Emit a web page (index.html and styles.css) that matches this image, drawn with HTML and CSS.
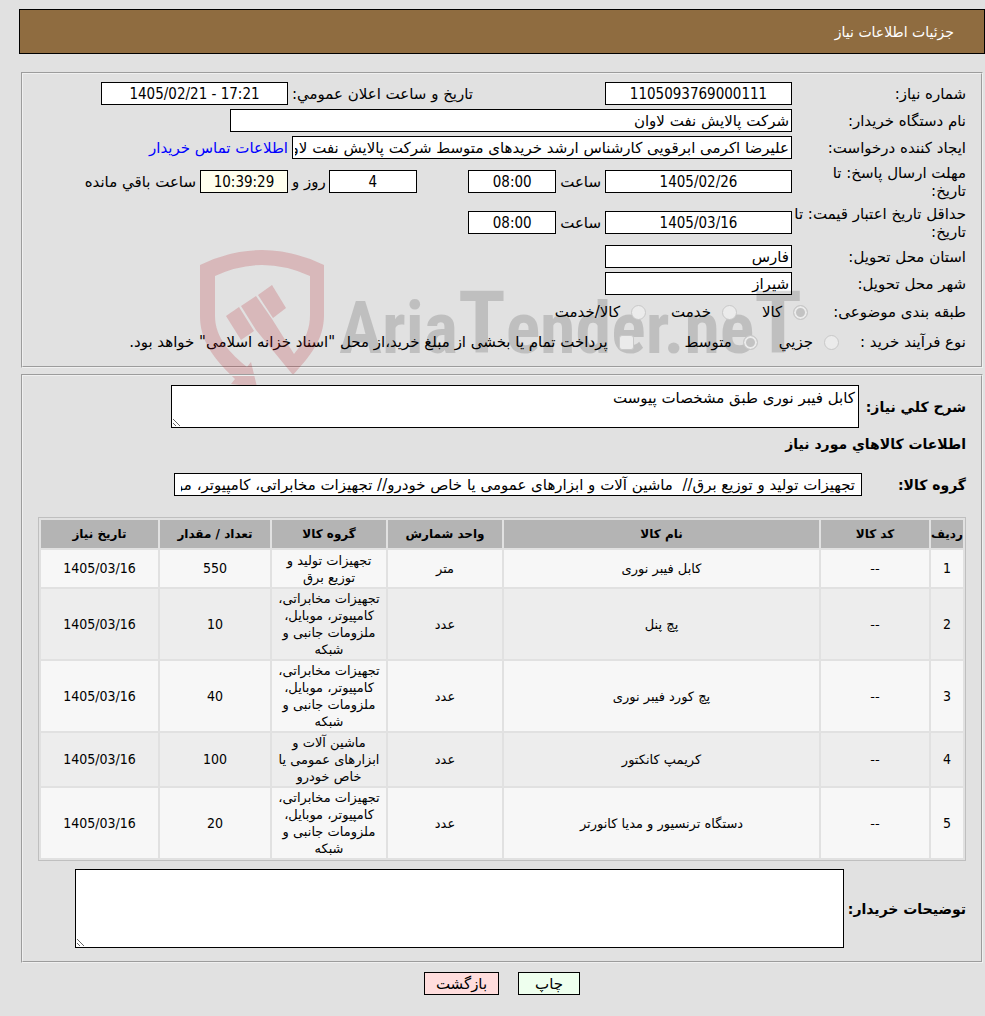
FILE: index.html
```html
<!DOCTYPE html>
<html lang="fa" dir="rtl">
<head>
  <meta charset="UTF-8">
  <title>جزئیات اطلاعات نیاز</title>
  <link rel="stylesheet" href="styles.css">
</head>
<body>

<h1 class="page-title">جزئیات اطلاعات نیاز</h1>

<section class="panel panel-info">
  <div class="row">
    <label class="row-label" for="needNo">شماره نیاز:</label>
    <div class="row-main">
      <input class="field field-md center" id="needNo" dir="ltr" value="1105093769000111" readonly>
      <label for="announce">تاریخ و ساعت اعلان عمومي:</label>
    </div>
    <input class="field field-md center" id="announce" dir="ltr" value="1405/02/21 - 17:21" readonly>
  </div>
  <div class="row">
    <label class="row-label" for="buyer">نام دستگاه خریدار:</label>
    <input class="field field-xl" id="buyer" value="شرکت پالایش نفت لاوان" readonly>
  </div>
  <div class="row">
    <label class="row-label" for="creator">ایجاد کننده درخواست:</label>
    <div class="row-main">
      <input class="field field-lg" id="creator" value="علیرضا اکرمی ابرقویی کارشناس ارشد خریدهای متوسط شرکت پالایش نفت لاوان" readonly>
    </div>
    <a class="contact" href="#">اطلاعات تماس خریدار</a>
  </div>
  <div class="row row-tall">
    <label class="row-label" for="replyDate">مهلت ارسال پاسخ: تا<br>تاریخ:</label>
    <div class="row-main">
      <div class="group">
        <input class="field field-md center" id="replyDate" dir="ltr" value="1405/02/26" readonly>
        <label for="replyTime">ساعت</label>
        <input class="field field-sm center" id="replyTime" dir="ltr" value="08:00" readonly>
      </div>
      <div class="group group-days">
        <input class="field field-sm center" id="days" value="4" readonly>
        <label for="days">روز و</label>
      </div>
    </div>
    <div class="group">
      <input class="field field-sm center timer" id="timer" dir="ltr" value="10:39:29" readonly>
      <label for="timer">ساعت باقي مانده</label>
    </div>
  </div>
  <div class="row row-tall">
    <label class="row-label" for="priceDate">حداقل تاریخ اعتبار قیمت: تا<br>تاریخ:</label>
    <div class="group">
      <input class="field field-md center" id="priceDate" dir="ltr" value="1405/03/16" readonly>
      <label for="priceTime">ساعت</label>
      <input class="field field-sm center" id="priceTime" dir="ltr" value="08:00" readonly>
    </div>
  </div>
  <div class="row">
    <label class="row-label" for="province">استان محل تحویل:</label>
    <input class="field field-md" id="province" value="فارس" readonly>
  </div>
  <div class="row">
    <label class="row-label" for="city">شهر محل تحویل:</label>
    <input class="field field-md" id="city" value="شیراز" readonly>
  </div>
  <div class="row row-options">
    <span>طبقه بندی موضوعی:</span>
    <label class="option"><input type="radio" name="kind" checked disabled>کالا</label>
    <label class="option"><input type="radio" name="kind" disabled>خدمت</label>
    <label class="option"><input type="radio" name="kind" disabled>کالا/خدمت</label>
  </div>
  <div class="row row-options row-process">
    <span>نوع فرآیند خرید :</span>
    <label class="option"><input type="radio" name="process" disabled>جزیي</label>
    <label class="option"><input type="radio" name="process" checked disabled>متوسط</label>
    <label class="option option-pay"><input type="checkbox" disabled>پرداخت تمام یا بخشی از مبلغ خرید،از محل "اسناد خزانه اسلامی" خواهد بود.</label>
  </div>

  <svg class="watermark" width="610" height="142" viewBox="0 0 610 142" direction="ltr">
    <g class="wm-red">
      <path d="M0 15Q62 -15 124 15V65C124 90 110 106 93 125L56 80L41 56L56 46L72 69L94 104C106 90 110 78 110 65V26Q62 4 15 26V66C15 88 31 104 47 117L51 112L57 137L31 134L35 129C13 108 0 90 0 66Z"/>
      <path d="M26 66L39 57L54 81L41 90Z"/>
      <path d="M58 45L72 35L86 58L73 68Z"/>
    </g>
    <text class="wm-text" x="139" y="103">Aria<tspan class="wm-cap">T</tspan>ender.ne<tspan class="wm-cap">T</tspan></text>
  </svg>
</section>

<section class="panel panel-goods">
  <div class="line">
    <label class="line-label" for="summary">شرح کلي نیاز:</label>
    <textarea class="field area-summary" id="summary" readonly>کابل فیبر نوری طبق مشخصات پیوست</textarea>
  </div>
  <h2 class="subtitle">اطلاعات کالاهاي مورد نیاز</h2>
  <div class="line">
    <label class="line-label label-group" for="goodsGroup">گروه کالا:</label>
    <input class="field field-group" id="goodsGroup" value="تجهیزات تولید و توزیع برق//  ماشین آلات و ابزارهای عمومی یا خاص خودرو// تجهیزات مخابراتی، کامپیوتر، موبایل، ملزومات جانبی و شبکه" readonly>
  </div>

  <table class="goods">
    <thead>
      <tr>
        <th class="c-row">ردیف</th>
        <th class="c-code">کد کالا</th>
        <th>نام کالا</th>
        <th class="c-unit">واحد شمارش</th>
        <th class="c-group">گروه کالا</th>
        <th class="c-count">تعداد / مقدار</th>
        <th class="c-date">تاریخ نیاز</th>
      </tr>
    </thead>
    <tbody>
      <tr><td class="num">1</td><td>--</td><td>کابل فیبر نوری</td><td>متر</td><td>تجهیزات تولید و<br>توزیع برق</td><td class="num">550</td><td class="num">1405/03/16</td></tr>
      <tr><td class="num">2</td><td>--</td><td>پچ پنل</td><td>عدد</td><td>تجهیزات مخابراتی،<br>کامپیوتر، موبایل،<br>ملزومات جانبی و<br>شبکه</td><td class="num">10</td><td class="num">1405/03/16</td></tr>
      <tr><td class="num">3</td><td>--</td><td>پچ کورد فیبر نوری</td><td>عدد</td><td>تجهیزات مخابراتی،<br>کامپیوتر، موبایل،<br>ملزومات جانبی و<br>شبکه</td><td class="num">40</td><td class="num">1405/03/16</td></tr>
      <tr><td class="num">4</td><td>--</td><td>کریمپ کانکتور</td><td>عدد</td><td>ماشین آلات و<br>ابزارهای عمومی یا<br>خاص خودرو</td><td class="num">100</td><td class="num">1405/03/16</td></tr>
      <tr><td class="num">5</td><td>--</td><td>دستگاه ترنسیور و مدیا کانورتر</td><td>عدد</td><td>تجهیزات مخابراتی،<br>کامپیوتر، موبایل،<br>ملزومات جانبی و<br>شبکه</td><td class="num">20</td><td class="num">1405/03/16</td></tr>
    </tbody>
  </table>

  <div class="line">
    <label class="line-label label-notes" for="notes">توضیحات خریدار:</label>
    <textarea class="field area-notes" id="notes" readonly></textarea>
  </div>
</section>

<div class="actions">
  <button class="btn btn-print" type="button">چاپ</button>
  <button class="btn btn-back" type="button">بازگشت</button>
</div>

</body>
</html>
```
FILE: styles.css
```css
* {
  box-sizing: border-box;
}

body {
  margin: 0;
  padding: 9px 0 20px 19px;
  background: #e1e1e1;
  color: #000;
  font-family: "DejaVu Sans", Tahoma, sans-serif;
  font-size: 15px;
  line-height: 18px;
}

.page-title {
  display: flex;
  align-items: center;
  height: 45px;
  margin: 0 0 18px;
  padding: 0 30px;
  border: 1px solid #000;
  background: #8f6c40;
  color: #fff;
  font-size: 14px;
  font-weight: normal;
}

.panel {
  position: relative;
  margin: 0 2px 6px;
  border: 2px groove #f0f0f0;
}

.panel-info {
  display: flex;
  flex-direction: column;
  gap: 4px;
  padding: 8px 15px 11px;
}

.row {
  display: flex;
  align-items: center;
  min-height: 23px;
  white-space: nowrap;
}

.row-tall {
  min-height: 37px;
}

.row-label {
  flex: 0 0 174px;
}

.row-main {
  display: flex;
  flex: 0 0 504px;
  align-items: center;
  justify-content: space-between;
  padding-left: 4px;
}

.group {
  display: flex;
  align-items: center;
  gap: 4px;
}

.group-days {
  gap: 3px;
}

.row-options {
  gap: 25px;
  min-height: 26px;
}

.row-process {
  gap: 21px;
}

.option {
  display: flex;
  align-items: center;
  gap: 11px;
}

.option-pay {
  margin-right: 30px;
}

.option input {
  appearance: none;
  position: relative;
  z-index: 1;
  width: 15px;
  height: 15px;
  margin: 0;
  border: 1px solid #c8c8c8;
  border-radius: 50%;
  background: #ebebeb;
}

.option input[type="checkbox"] {
  border-radius: 3px;
}

.option input:checked {
  background: #c3c3c3;
  box-shadow: inset 0 0 0 2px #ebebeb;
}

.field {
  height: 23px;
  margin: 0;
  padding: 1px 2px;
  border: 1px solid #000;
  border-radius: 0;
  background: #fff;
  color: #000;
  font-family: inherit;
  font-size: 15px;
}

.field-sm { width: 88px; }
.field-md { width: 187px; }
.field-lg { width: 500px; }
.field-xl { width: 562px; }

.center {
  font-family: "DejaVu Sans Condensed", Tahoma, sans-serif;
  text-align: center;
}

.timer {
  background: #ffffee;
}

.contact {
  color: #00f;
  text-decoration: none;
}

.watermark {
  position: absolute;
  top: 176px;
  left: 177px;
  pointer-events: none;
}

.wm-red {
  fill: rgba(180, 20, 30, 0.2);
}

.wm-text {
  fill: rgba(0, 0, 0, 0.15);
  font-family: "Roboto Condensed", Roboto, sans-serif;
  font-size: 72px;
  font-weight: bold;
}

.wm-cap {
  font-size: 88px;
}

.panel-goods {
  padding: 9px 15px 13px;
}

.line {
  display: flex;
  align-items: center;
}

.line-label {
  flex: 0 0 107px;
  font-size: 14px;
  font-weight: bold;
  white-space: nowrap;
}

.label-group {
  flex-basis: 104px;
}

.label-notes {
  flex-basis: 122px;
}

.area-summary,
.field-group {
  width: 688px;
}

.field-group {
  padding: 1px 6px;
}

.area-summary {
  height: 43px;
  padding: 3px;
}

.area-notes {
  width: 769px;
  height: 79px;
}

.subtitle {
  margin: 7px 0 20px;
  font-size: 14px;
  font-weight: bold;
}

.goods {
  width: 100%;
  margin: 21px 0 8px;
  border: 1px solid #bfbfbf;
  border-spacing: 2px;
  table-layout: fixed;
  font-size: 13px;
  line-height: 17px;
  text-align: center;
}

.goods th {
  height: 28px;
  padding: 0;
  background: #b4b4b4;
  font-size: 12px;
  white-space: nowrap;
}

.goods td {
  height: 37px;
  padding: 1px;
  background: #ededed;
}

.goods tbody tr:nth-child(odd) td {
  background: #f7f7f7;
}

.goods .num {
  font-family: "DejaVu Sans Condensed", Tahoma, sans-serif;
  font-size: 14px;
}

.c-row { width: 32px; }
.c-code { width: 108px; }
.c-unit,
.c-group { width: 114px; }
.c-count { width: 110px; }
.c-date { width: 117px; }

.actions {
  display: flex;
  justify-content: center;
  gap: 19px;
  margin-top: 9px;
}

.btn {
  height: 23px;
  padding: 0 10px;
  border: 1px solid #000;
  font-family: inherit;
  font-size: 15px;
}

.btn-print {
  width: 62px;
  background: #efe;
}

.btn-back {
  width: 75px;
  background: #fdd;
}
```
